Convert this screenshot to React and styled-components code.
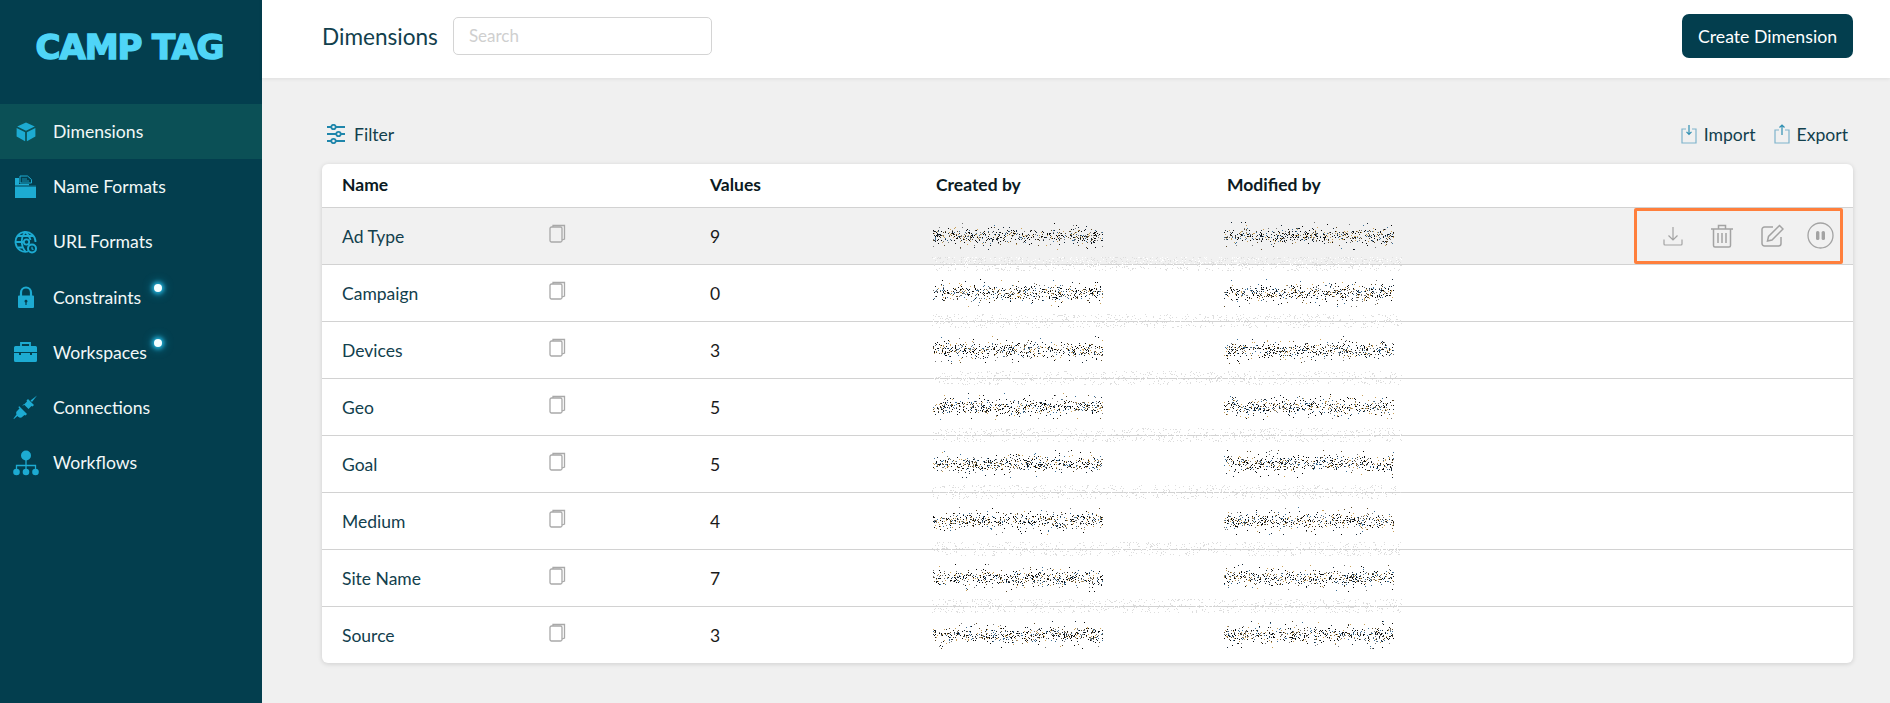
import React from "react";
import styled, { createGlobalStyle } from "styled-components";

const GlobalStyle = createGlobalStyle`
  html, body {
    margin: 0;
    padding: 0;
    background: #f0f0f0;
  }
  body {
    font-family: Lato, "Open Sans", sans-serif;
    color: #12404d;
  }
`;

const Page = styled.div`
  display: flex;
  width: 1890px;
  height: 703px;
  overflow: hidden;
`;

const Sidebar = styled.aside`
  width: 262px;
  flex: none;
  background: #033e4e;
`;

const LogoBox = styled.div`
  height: 104px;
  box-sizing: border-box;
  padding: 27px 3px 0 0;
  text-align: center;
`;

const Logo = styled.div`
  font-family: "DejaVu Sans", sans-serif;
  font-weight: 700;
  font-size: 34px;
  line-height: 40px;
  letter-spacing: -1.1px;
  color: #4fd5f7;
  -webkit-text-stroke: 1.5px #4fd5f7;
  white-space: nowrap;
`;

const NavItem = styled.div`
  position: relative;
  display: flex;
  align-items: center;
  height: 55.2px;
  padding-left: 12px;
  background: ${(p) => (p.$active ? "#0b5056" : "transparent")};
  color: #f2f8f8;
  font-size: 17.6px;
`;

const NavIcon = styled.span`
  display: flex;
  justify-content: center;
  width: 27px;
  margin-right: 14px;
  color: #1dabd2;
`;

const Dot = styled.span`
  position: absolute;
  left: 154px;
  top: 14px;
  width: 8px;
  height: 8px;
  border-radius: 50%;
  background: #f4feff;
  box-shadow: 0 0 4px 2px #22b4de, 0 0 8px 4px rgba(30, 170, 210, 0.3);
`;

const Main = styled.main`
  flex: 1;
  min-width: 0;
`;

const Header = styled.header`
  display: flex;
  align-items: center;
  height: 78px;
  box-sizing: border-box;
  padding: 0 37px 6px 60px;
  background: #fff;
  box-shadow: 0 1px 4px rgba(0, 0, 0, 0.08);
`;

const Title = styled.h1`
  margin: 0 15px 0 0;
  font-size: 22.6px;
  font-weight: 400;
  color: #12404d;
`;

const Search = styled.div`
  width: 259px;
  height: 38px;
  box-sizing: border-box;
  padding: 0 15px;
  border: 1px solid #d4d4d4;
  border-radius: 5px;
  font-size: 17px;
  line-height: 35px;
  color: #cfcfcf;
`;

const CreateButton = styled.button`
  margin-left: auto;
  width: 171px;
  height: 44px;
  border: 0;
  border-radius: 7px;
  background: #033e4e;
  color: #fff;
  font-family: inherit;
  font-size: 17.7px;
`;

const Content = styled.div`
  padding: 0 37px 0 60px;
`;

const Toolbar = styled.div`
  display: flex;
  align-items: center;
  justify-content: space-between;
  height: 86px;
  box-sizing: border-box;
  padding-top: 26px;
  font-size: 17.6px;
`;

const ToolGroup = styled.div`
  display: flex;
  align-items: center;
  gap: 18px;
  padding: 0 5px 0 4px;
`;

const ToolLink = styled.span`
  display: flex;
  align-items: center;
  gap: ${(p) => p.$gap || 7}px;
  color: #12404d;
`;

const Table = styled.div`
  background: #fff;
  border-radius: 6px;
  box-shadow: 0 1px 5px rgba(0, 0, 0, 0.14);
`;

const Row = styled.div`
  position: relative;
  display: grid;
  grid-template-columns: 207px 161px 226px 291px 407px 219px;
  align-items: center;
  height: ${(p) => (p.$head ? 44 : p.$last ? 56 : 57)}px;
  box-sizing: border-box;
  padding-left: 20px;
  padding-bottom: ${(p) => (p.$head ? 2 : 0)}px;
  background: ${(p) => (p.$hover ? "#f1f1f1" : "transparent")};
  border-bottom: ${(p) => (p.$last ? "0" : "1px solid #d2d2d2")};
  font-size: 17.5px;
  color: #12404d;
`;

const HeadCell = styled.span`
  font-weight: 700;
  color: #0b1a22;
`;

const Count = styled.span`
  color: #1a1a1a;
`;

const CopyButton = styled.span`
  display: flex;
  color: #a9a9a9;
  margin-top: -5px;
`;

const Redacted = styled.span`
  display: block;
  margin-left: -3px;
  & > svg {
    display: block;
  }
`;

const Smudge = styled.svg`
  position: absolute;
  left: 610px;
  bottom: -7px;
  pointer-events: none;
`;

const Actions = styled.div`
  display: flex;
  align-items: center;
  width: 209px;
  height: 56px;
  box-sizing: border-box;
  margin-top: -1px;
  padding-left: 26px;
  border: 3px solid #ff7f3c;
  border-radius: 2px;
  color: #a3a3a3;
  gap: 28px;
  & > svg {
    flex: none;
  }
  & > svg:last-child {
    margin-left: -5px;
  }
`;

// bitmap-looking speckle that hides the user names
const rng = (seed) => {
  let s = seed;
  return () => {
    s = (s * 16807) % 2147483647;
    return s / 2147483647;
  };
};

const inks = ["#0a0a0a", "#0a0a0a", "#1b2b3a", "#5c4a2a", "#c9a15a", "#3d6f96", "#777"];

const Speckle = ({ seed, width = 170 }) => {
  const r = rng(seed * 7919 + 13);
  const dots = [];
  for (let i = 0; i < 560; i++) {
    const x = Math.floor(r() * width);
    // most dots sit on the text line, a few stray above and below it
    const spread = i % 9 === 0 ? r() - 0.5 : (r() + r() + r()) / 3 - 0.5;
    const y = Math.floor(15 + spread * (i % 9 === 0 ? 28 : 22));
    dots.push(
      <rect key={i} x={x} y={y} width="1" height="1" fill={inks[Math.floor(r() * inks.length)]} />
    );
  }
  return (
    <svg width={width} height="30" shapeRendering="crispEdges">
      {dots}
    </svg>
  );
};

const Haze = ({ seed }) => {
  const r = rng(seed * 104729 + 5);
  const dots = [];
  for (let i = 0; i < 1300; i++) {
    const x = Math.floor(r() * 470);
    const y = Math.floor(r() * 14);
    dots.push(<rect key={i} x={x} y={y} width="1" height="1" fill={r() > 0.5 ? "#ffffff" : "#dedede"} />);
  }
  return (
    <Smudge width="470" height="14" shapeRendering="crispEdges">
      {dots}
    </Smudge>
  );
};

const CubeIcon = () => (
  <svg width="20" height="20" viewBox="0 0 20 20" fill="currentColor">
    <path d="M10 .6 1.2 4.600 10 8.800l8.800-4.200z" />
    <path d="M.6 6v8.500L9.100 19.200V10.300z" />
    <path d="M19.400 6v8.500L10.900 19.200V10.300z" />
  </svg>
);

const FolderIcon = () => (
  <svg width="23" height="24" viewBox="0 0 23 24" fill="currentColor">
    <path d="M6 1h7.500l4 3.500V8H6z" fill="none" stroke="currentColor" strokeWidth="1" />
    <path d="M8 4h5M8 6h7" stroke="currentColor" strokeWidth=".8" />
    <path d="M1 3h4v6h10v1.500h7V23H1z" />
    <path d="M1 11h21" stroke="#033e4e" strokeWidth="1" />
  </svg>
);

const GlobeIcon = () => (
  <svg width="24" height="24" viewBox="0 0 24 24" fill="none" stroke="currentColor" strokeWidth="1.800">
    <path d="M14 21.500A10 10 0 1 1 21.500 12" />
    <path d="M2 12h7M11.500 2c-5 5-5 14 0 19.500M11.500 2c3 2.500 4.500 5.500 5 8M4 6h15M4 17.500h5" />
    <circle cx="12.500" cy="12" r="2.700" />
    <circle cx="18" cy="18.500" r="4" fill="#033e4e" strokeWidth="2" />
    <path d="M18 16.800v2l1.500.8" strokeWidth="1.200" />
  </svg>
);

const LockIcon = () => (
  <svg width="18" height="23" viewBox="0 0 18 23" fill="currentColor">
    <path d="M4 10V6.500a5 5 0 0 1 10 0V10" fill="none" stroke="currentColor" strokeWidth="2.200" />
    <path fillRule="evenodd" d="M2 9.500h14a1 1 0 0 1 1 1V21a1 1 0 0 1-1 1H2a1 1 0 0 1-1-1V10.500a1 1 0 0 1 1-1zM9 13.800a1.400 1.400 0 0 0-.6 2.700V19h1.200v-2.500a1.400 1.400 0 0 0-.6-2.700z" />
  </svg>
);

const CaseIcon = () => (
  <svg width="25" height="22" viewBox="0 0 25 22" fill="currentColor">
    <path d="M8 5V2h9v3" fill="none" stroke="currentColor" strokeWidth="1.800" />
    <path d="M2.500 5h20A1.500 1.500 0 0 1 24 6.500V11H1V6.500A1.500 1.500 0 0 1 2.500 5z" />
    <path d="M1 12h5v2h2v-2h9v2h2v-2h5v7.500a1.500 1.500 0 0 1-1.500 1.500h-20A1.500 1.500 0 0 1 1 19.500z" />
  </svg>
);

const PlugIcon = () => (
  <svg width="25" height="25" viewBox="0 0 25 25" fill="currentColor">
    <path d="M24 .5l-6.500 5 1.500 1.500z" />
    <path d="M13.500 5.500l1.500-1.500 6 6-1.500 1.500-1-.5-3 3-4.500-4.500 3-3z" />
    <path d="M11.500 9l-1.500 1.500" stroke="currentColor" />
    <path d="M6 11l8 8-1.500 1.500-1-.5-3 2.500c-2 .5-3.500-.5-4-1.500l-3.500 3-.5-.5 3-4c-.5-1.500-.5-2.500.5-3.500l2.500-2.500-1-1z" />
  </svg>
);

const TreeIcon = () => (
  <svg width="26" height="26" viewBox="0 0 26 26" fill="currentColor">
    <circle cx="13" cy="5.500" r="5" />
    <path d="M13 10v9M3.500 19v-3.500h19V19" fill="none" stroke="currentColor" strokeWidth="1.300" />
    <circle cx="3.500" cy="22" r="3.300" />
    <circle cx="13" cy="22" r="3.300" />
    <circle cx="22.500" cy="22" r="3.300" />
  </svg>
);

const FilterIcon = () => (
  <svg width="20" height="20" viewBox="0 0 20 20" fill="none" stroke="#1f86ab" strokeWidth="1.800">
    <path d="M1 3h4M10 3h9M1 10h9M15 10h4M1 17h4M10 17h9" />
    <circle cx="7.500" cy="3" r="2.200" />
    <circle cx="12.500" cy="10" r="2.200" />
    <circle cx="7.500" cy="17" r="2.200" />
  </svg>
);

const ImportIcon = () => (
  <svg width="16" height="20" viewBox="0 0 16 20" fill="none" stroke="#7fb4cc" strokeWidth="1.200">
    <path d="M5 5H1v14h14V5h-4" />
    <path d="M8 1v9M5.500 7.800 8 10.300l2.500-2.500" stroke="#2f8fb2" />
  </svg>
);

const ExportIcon = () => (
  <svg width="16" height="20" viewBox="0 0 16 20" fill="none" stroke="#7fb4cc" strokeWidth="1.200">
    <path d="M5 6H1v13h14V6h-4" />
    <path d="M8 11V1M5.500 3.500 8 1l2.500 2.500" stroke="#2f8fb2" />
  </svg>
);

const CopyIcon = () => (
  <svg width="17" height="19" viewBox="0 0 17 19" fill="none" stroke="currentColor" strokeWidth="1.300">
    <rect x="1" y="3" width="12" height="15" rx="1.500" />
    <path d="M4 3V1.500h11.500V15L13 16" />
  </svg>
);

const DownloadIcon = () => (
  <svg width="20" height="20" viewBox="0 0 20 20" fill="none" stroke="currentColor" strokeWidth="1.200">
    <path d="M10 1v12.500M5.500 9.500 10 14l4.500-4.500" />
    <path d="M1 13.500V18a1 1 0 0 0 1 1h16a1 1 0 0 0 1-1v-4.500" />
  </svg>
);

const TrashIcon = () => (
  <svg width="22" height="24" viewBox="0 0 22 24" fill="none" stroke="currentColor" strokeWidth="1.500">
    <path d="M0 5h22M7.500 5V1.500h7V5" />
    <path d="M2.500 5v16.500A1.500 1.500 0 0 0 4 23h14a1.500 1.500 0 0 0 1.500-1.500V5" />
    <path d="M7 9v10M11 9v10M15 9v10" />
  </svg>
);

const EditIcon = () => (
  <svg width="23" height="23" viewBox="0 0 23 23" fill="none" stroke="currentColor" strokeWidth="1.500">
    <path d="M20 13v6.500a2.500 2.500 0 0 1-2.500 2.500h-14A2.500 2.500 0 0 1 1 19.500v-14A2.500 2.500 0 0 1 3.500 3H12" />
    <path d="M18.500 1.500 22 5 11 16l-4.500 1 1-4.500z" />
  </svg>
);

const PauseIcon = () => (
  <svg width="27" height="27" viewBox="0 0 27 27" fill="none">
    <circle cx="13.500" cy="13.500" r="12.500" stroke="currentColor" strokeWidth="1.300" />
    <rect x="9" y="9" width="3.400" height="9" rx="1.600" fill="currentColor" />
    <rect x="14.600" y="9" width="3.400" height="9" rx="1.600" fill="currentColor" />
  </svg>
);

const navItems = [
  { label: "Dimensions", icon: <CubeIcon />, active: true },
  { label: "Name Formats", icon: <FolderIcon /> },
  { label: "URL Formats", icon: <GlobeIcon /> },
  { label: "Constraints", icon: <LockIcon />, dot: true },
  { label: "Workspaces", icon: <CaseIcon />, dot: true },
  { label: "Connections", icon: <PlugIcon /> },
  { label: "Workflows", icon: <TreeIcon /> },
];

const rows = [
  ["Ad Type", 9],
  ["Campaign", 0],
  ["Devices", 3],
  ["Geo", 5],
  ["Goal", 5],
  ["Medium", 4],
  ["Site Name", 7],
  ["Source", 3],
];

export default function App() {
  return (
    <Page>
      <GlobalStyle />
      <Sidebar>
        <LogoBox>
          <Logo>CAMP TAG</Logo>
        </LogoBox>
        {navItems.map((item) => (
          <NavItem key={item.label} $active={item.active}>
            <NavIcon>{item.icon}</NavIcon>
            <span>{item.label}</span>
            {item.dot && <Dot />}
          </NavItem>
        ))}
      </Sidebar>
      <Main>
        <Header>
          <Title>Dimensions</Title>
          <Search>Search</Search>
          <CreateButton>Create Dimension</CreateButton>
        </Header>
        <Content>
          <Toolbar>
            <ToolGroup>
              <ToolLink $gap={8}>
                <FilterIcon />
                Filter
              </ToolLink>
            </ToolGroup>
            <ToolGroup>
              <ToolLink>
                <ImportIcon />
                Import
              </ToolLink>
              <ToolLink>
                <ExportIcon />
                Export
              </ToolLink>
            </ToolGroup>
          </Toolbar>
          <Table>
            <Row $head>
              <HeadCell>Name</HeadCell>
              <span />
              <HeadCell>Values</HeadCell>
              <HeadCell>Created by</HeadCell>
              <HeadCell>Modified by</HeadCell>
            </Row>
            {rows.map(([name, count], i) => (
              <Row key={name} $hover={i === 0} $last={i === rows.length - 1}>
                <span>{name}</span>
                <CopyButton>
                  <CopyIcon />
                </CopyButton>
                <Count>{count}</Count>
                <Redacted>
                  <Speckle seed={i * 2 + 1} />
                </Redacted>
                <Redacted>
                  <Speckle seed={i * 2 + 2} />
                </Redacted>
                {i === 0 && (
                  <Actions>
                    <DownloadIcon />
                    <TrashIcon />
                    <EditIcon />
                    <PauseIcon />
                  </Actions>
                )}
                {i < rows.length - 1 && <Haze seed={i + 1} />}
              </Row>
            ))}
          </Table>
        </Content>
      </Main>
    </Page>
  );
}
